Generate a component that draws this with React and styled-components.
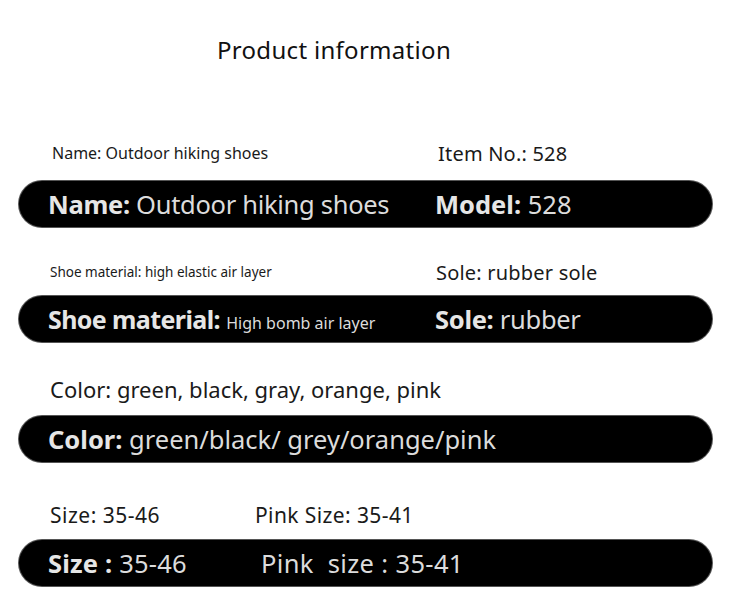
import React from "react";
import styled, { createGlobalStyle } from "styled-components";

const Global = createGlobalStyle`
  html, body { margin: 0; padding: 0; background: #fff; }
  body { font-family: "Noto Sans", "Open Sans", sans-serif; color: #111; }
`;

const Page = styled.div`
  width: 750px;
  height: 614px;
  background: #fff;
  overflow: hidden;
  display: flex;
  flex-direction: column;
  padding: 0 38px 0 19px;
  box-sizing: border-box;
`;

const Title = styled.h1`
  margin: 0;
  height: 98px;
  display: flex;
  align-items: center;
  padding-left: 198px;
  font-weight: 400;
  font-size: 24px;
  color: #111;
  letter-spacing: 0.3px;
`;

const Section = styled.section`
  display: flex;
  flex-direction: column;
  margin-top: ${(p) => p.$gap}px;
`;

const LabelRow = styled.div`
  height: ${(p) => p.$h}px;
  display: grid;
  grid-template-columns: ${(p) => p.$cols || "386px 1fr"};
  align-items: center;
  padding-left: ${(p) => p.$pad || 31}px;
`;

const Label = styled.span`
  font-size: ${(p) => p.$size}px;
  color: #1a1a1a;
  white-space: nowrap;
  letter-spacing: ${(p) => p.$ls || 0}px;
`;

const Bar = styled.div`
  height: 46px;
  background: #000;
  border-radius: 23px;
  display: grid;
  grid-template-columns: ${(p) => p.$cols || "387px 1fr"};
  align-items: center;
  padding-left: 29px;
  box-shadow: 0 0 0 1px #555;
  color: #dcdcdc;
`;

const Cell = styled.span`
  font-size: 25.5px;
  white-space: pre;
  letter-spacing: ${(p) => p.$ls ?? -0.3}px;
`;

const Key = styled.b`
  font-weight: 700;
  color: #e6e6e6;
  font-size: ${(p) => p.$size || 25.5}px;
  letter-spacing: ${(p) => p.$ls ?? -0.3}px;
`;

const Small = styled.span`
  font-size: 16px;
  letter-spacing: 0;
`;

export default function App() {
  return (
    <Page>
      <Global />
      <Title>Product information</Title>

      <Section $gap={27}>
        <LabelRow $h={56} $pad={33}>
          <Label $size={16}>Name: Outdoor hiking shoes</Label>
          <Label $size={20} $ls={0.2}>Item No.: 528</Label>
        </LabelRow>
        <Bar>
          <Cell><Key>Name:</Key> Outdoor hiking shoes</Cell>
          <Cell $ls={0}><Key $ls={0}>Model:</Key> 528</Cell>
        </Bar>
      </Section>

      <Section $gap={21}>
        <LabelRow $h={48}>
          <Label $size={13.5}>Shoe material: high elastic air layer</Label>
          <Label $size={20} $ls={0.2}>Sole: rubber sole</Label>
        </LabelRow>
        <Bar>
          <Cell><Key $size={25} $ls={-0.6}>Shoe material:</Key> <Small>High bomb air layer</Small></Cell>
          <Cell><Key>Sole:</Key> rubber</Cell>
        </Bar>
      </Section>

      <Section $gap={20}>
        <LabelRow $h={54} $cols="1fr">
          <Label $size={22}>Color: green, black, gray, orange, pink</Label>
        </LabelRow>
        <Bar $cols="1fr">
          <Cell $ls={0}><Key $ls={0}>Color:</Key> green/black/ grey/orange/pink</Cell>
        </Bar>
      </Section>

      <Section $gap={28}>
        <LabelRow $h={50} $cols="205px 1fr">
          <Label $size={21} $ls={0.5}>Size: 35-46</Label>
          <Label $size={21} $ls={0.4}>Pink Size: 35-41</Label>
        </LabelRow>
        <Bar $cols="213px 1fr">
          <Cell $ls={0.2}><Key $ls={0.2}>Size :</Key> 35-46</Cell>
          <Cell $ls={0.35}>{"Pink  size : 35-41"}</Cell>
        </Bar>
      </Section>
    </Page>
  );
}
